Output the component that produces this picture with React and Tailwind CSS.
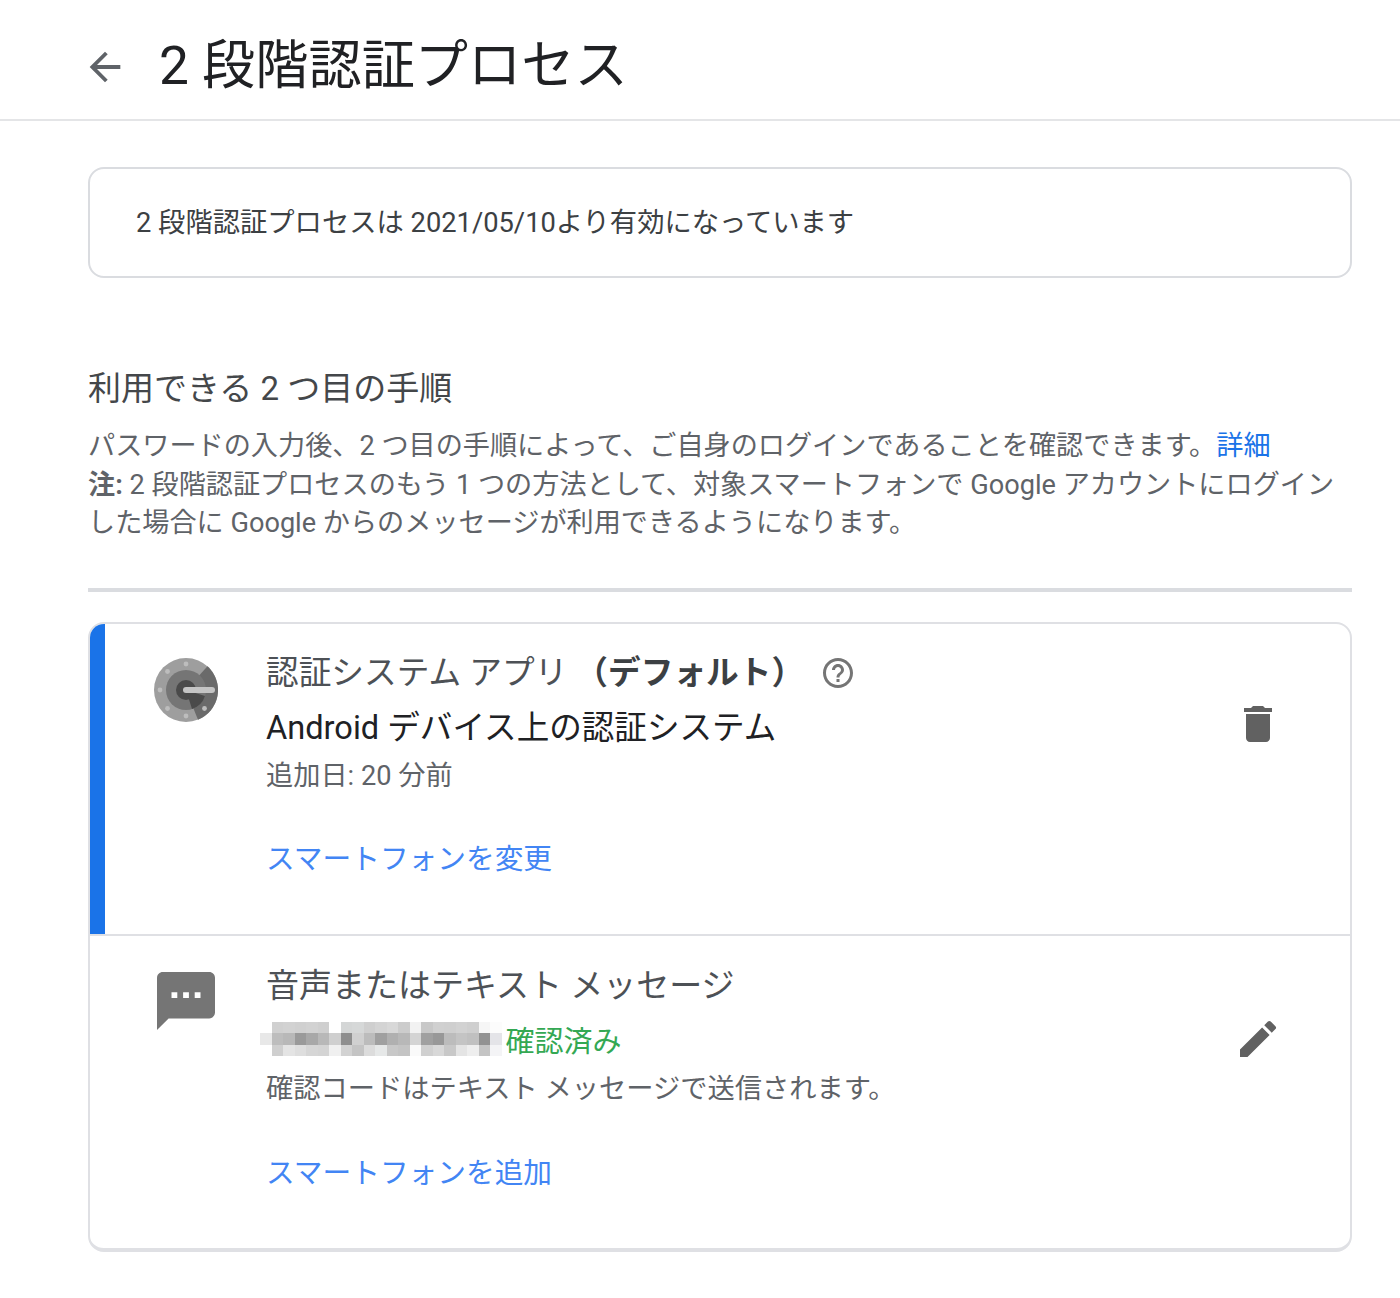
import React from "react";

const mosaic = [
  ["#fff", "#d0d0d0", "#d2d2d2", "#d0d0d0", "#d2d2d2", "#cfcfcf", "#fff", "#d4d6d6", "#d6d8d8", "#cfcfcf", "#d4d4d4", "#d8d8d8", "#cccccc", "#f2f2f2", "#c8c8c8", "#d0d0d0", "#cfcfcf", "#d2d2d2", "#cfcfcf", "#f6f6f6", "#fcfcfc"],
  ["#e8e8e8", "#bdbdbd", "#b8b8b8", "#9a9a9a", "#a8a8a8", "#b8b8b8", "#cfcfcf", "#8e8e8e", "#d0d0d0", "#bcbcbc", "#a0a0a0", "#b0b0b0", "#b8b8b8", "#d4d4d4", "#a0a0a0", "#989898", "#bcbcbc", "#c4c4c4", "#c0c0c0", "#929292", "#e4e4e8"],
  ["#fff", "#cfcfcf", "#e4e4e4", "#dedede", "#d6d6d6", "#d4d4d4", "#f0f0f0", "#d2d2d2", "#c4c4c4", "#dcdcdc", "#e6e8e8", "#c8c8c8", "#c4c4c4", "#fafafa", "#d0d0d0", "#d8d8d8", "#c8c8c8", "#e4e4e4", "#eeeeee", "#c4c4c4", "#f4f4f6"],
];

const AuthenticatorLogo = () => (
  <svg viewBox="0 0 64 64" className="w-16 h-16">
    <circle cx="32" cy="32" r="32" fill="#9e9e9e" />
    <path d="M32 32 L53.5 8.3 A32 32 0 0 1 44 61.7 Z" fill="#6a6a6a" />
    <circle cx="32" cy="32" r="20" fill="#757575" />
    <circle cx="32" cy="32" r="10" fill="#4a4a4a" />
    <path d="M32 32 L38 51 A20 20 0 0 0 51 38 Z" fill="#4a4a4a" />
    <rect x="29" y="29" width="32" height="6" rx="3" fill="#c4c4c4" />
    {[[32, 6], [13.5, 13.5], [6, 32], [13.5, 50.5], [32, 58], [50.5, 50.5]].map(([cx, cy]) => (
      <circle key={cx + "-" + cy} cx={cx} cy={cy} r="2.4" fill="#bdbdbd" />
    ))}
  </svg>
);

const App = () => {
  return (
    <div className="min-h-[1298px] bg-white text-[#5f6368] font-['Roboto','Noto_Sans_CJK_JP',sans-serif]">
      <header className="h-[121px] border-b-2 border-[#e4e5e7] flex items-center pl-[82px] pt-[10px]">
        <svg viewBox="0 0 24 24" className="w-[46px] h-[46px] mt-1 fill-[#5f6368]">
          <path d="M20 11H7.83l5.59-5.59L12 4l-8 8 8 8 1.41-1.41L7.83 13H20v-2z" />
        </svg>
        <h1 className="ml-[31px] mt-[4px] text-[53.2px] leading-none text-[#202124] whitespace-nowrap">2 段階認証プロセス</h1>
      </header>

      <main className="pr-[48px] pl-[88px] pt-[46px]">
        <div className="h-[111px] border-2 border-[#dadce0] rounded-2xl flex items-center pl-[46px] pt-[2px] text-[27.3px] text-[#3c4043] whitespace-nowrap">
          2 段階認証プロセスは 2021/05/10より有効になっています
        </div>

        <h2 className="mt-[91px] text-[33px] leading-[40px] text-[#44474a] whitespace-nowrap">利用できる 2 つ目の手順</h2>
        <p className="mt-[18px] text-[27.15px] leading-[38.6px] text-[#5f6368] whitespace-nowrap">
          パスワードの入力後、2 つ目の手順によって、ご自身のログインであることを確認できます。
          <a className="text-[#1a73e8]">詳細</a>
          <br />
          <span className="font-bold">注:</span> 2 段階認証プロセスのもう 1 つの方法として、対象スマートフォンで Google アカウントにログイン
          <br />
          した場合に Google からのメッセージが利用できるようになります。
        </p>

        <div className="mt-[45px] h-1 bg-[#dadce0]" />

        <section className="mt-[30px] border-2 border-b-4 border-[#dfe0e4] rounded-2xl overflow-hidden">
          <div className="h-[310px] flex border-l-[15px] border-[#1a73e8]">
            <div className="pt-[34px] pl-[49px] w-[161px] shrink-0">
              <AuthenticatorLogo />
            </div>
            <div className="flex-1 pt-[28px]">
              <div className="flex items-center h-11">
                <span className="text-[32.7px] text-[#4d5156] whitespace-nowrap">認証システム アプリ</span>
                <span className="ml-2 text-[32.7px] font-bold text-[#3c4043] whitespace-nowrap">（デフォルト）</span>
                <svg viewBox="0 0 24 24" className="ml-4 -mt-[2px] w-9 h-9 fill-[#757575]">
                  <path d="M11 18h2v-2h-2v2zm1-16C6.48 2 2 6.48 2 12s4.48 10 10 10 10-4.48 10-10S17.52 2 12 2zm0 18c-4.41 0-8-3.59-8-8s3.59-8 8-8 8 3.59 8 8-3.59 8-8 8zm0-14c-2.21 0-4 1.79-4 4h2c0-1.1.9-2 2-2s2 .9 2 2c0 2-3 1.75-3 5h2c0-2.25 3-2.5 3-5 0-2.21-1.79-4-4-4z" />
                </svg>
              </div>
              <p className="mt-[12px] text-[32.6px] leading-10 text-[#202124] whitespace-nowrap">Android デバイス上の認証システム</p>
              <p className="mt-[8px] text-[27.2px] leading-10 text-[#5f6368] whitespace-nowrap">追加日: 20 分前</p>
              <a className="block mt-[43px] text-[28.7px] leading-10 text-[#4285f4] whitespace-nowrap">スマートフォンを変更</a>
            </div>
            <div className="w-[76px] mr-[54px] shrink-0 flex justify-center pt-[76px]">
              <svg viewBox="0 0 24 24" className="w-12 h-12 fill-[#616161]">
                <path d="M6 19c0 1.1.9 2 2 2h8c1.1 0 2-.9 2-2V7H6v12zM19 4h-3.5l-1-1h-5l-1 1H5v2h14V4z" />
              </svg>
            </div>
          </div>

          <div className="h-[314px] flex border-t-2 border-[#dfe0e4]">
            <div className="pt-[36px] pl-[67px] w-[176px] shrink-0">
              <svg viewBox="2 2 20 20" className="w-[58px] h-[58px] fill-[#757575]">
                <path d="M20 2H4c-1.1 0-1.99.9-1.99 2L2 22l4-4h14c1.1 0 2-.9 2-2V4c0-1.1-.9-2-2-2zM9 11H7V9h2v2zm4 0h-2V9h2v2zm4 0h-2V9h2v2z" />
              </svg>
            </div>
            <div className="flex-1 pt-[28px]">
              <p className="text-[33px] leading-11 text-[#4d5156] whitespace-nowrap">音声またはテキスト メッセージ</p>
              <div className="mt-[17px] flex items-center h-9">
                <div className="-ml-[6px] -mt-[8px] grid grid-cols-[repeat(21,11.5px)] grid-rows-[repeat(3,11.5px)] shrink-0">
                  {mosaic.flat().map((c, i) => (
                    <span key={i} style={{ backgroundColor: c }} />
                  ))}
                </div>
                <span className="ml-[4px] text-[29px] text-[#34a853] whitespace-nowrap">確認済み</span>
              </div>
              <p className="mt-[8px] text-[27.25px] leading-10 text-[#5f6368] whitespace-nowrap">確認コードはテキスト メッセージで送信されます。</p>
              <a className="block mt-[44px] text-[28.7px] leading-10 text-[#4285f4] whitespace-nowrap">スマートフォンを追加</a>
            </div>
            <div className="w-[76px] mr-[54px] shrink-0 flex justify-center pt-[79px]">
              <svg viewBox="0 0 24 24" className="w-12 h-12 fill-[#616161]">
                <path d="M3 17.25V21h3.75L17.81 9.94l-3.75-3.75L3 17.25zM20.71 7.04a1 1 0 0 0 0-1.41l-2.34-2.34a1 1 0 0 0-1.41 0l-1.83 1.83 3.75 3.75 1.83-1.83z" />
              </svg>
            </div>
          </div>
        </section>
      </main>
    </div>
  );
};

export default App;
